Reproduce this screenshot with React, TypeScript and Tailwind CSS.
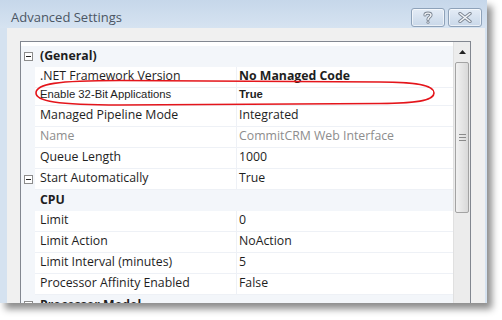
import React from "react";

type Row = {
  label: string;
  value?: string;
  category?: boolean;
  minus?: boolean;
  boldValue?: boolean;
  gray?: boolean;
  pasted?: boolean;
};

const ROWS: Row[] = [
  { label: "(General)", category: true, minus: true },
  { label: ".NET Framework Version", value: "No Managed Code", boldValue: true },
  { label: "Enable 32-Bit Applications", value: "True", boldValue: true, pasted: true },
  { label: "Managed Pipeline Mode", value: "Integrated" },
  { label: "Name", value: "CommitCRM Web Interface", gray: true },
  { label: "Queue Length", value: "1000" },
  { label: "Start Automatically", value: "True", minus: true },
  { label: "CPU", category: true },
  { label: "Limit", value: "0" },
  { label: "Limit Action", value: "NoAction" },
  { label: "Limit Interval (minutes)", value: "5" },
  { label: "Processor Affinity Enabled", value: "False" },
  { label: "Processor Model", category: true, minus: true },
];

function MinusBox() {
  return (
    <div className="w-[9px] h-[9px] border border-[#8c8c8c] bg-white flex items-center justify-center">
      <div className="w-[5px] h-px bg-[#222]" />
    </div>
  );
}

function GridRow({ row }: { row: Row }) {
  if (row.category) {
    return (
      <div className="flex h-[21px] shrink-0 bg-[#f3f6fa]">
        <div className="w-[14px] flex items-center justify-center">{row.minus && <MinusBox />}</div>
        <div className="pl-[5px] flex items-center font-bold text-[#1e1e1e]">{row.label}</div>
      </div>
    );
  }
  const h = row.pasted ? "h-[18px] pb-[3px]" : "h-[21px]";
  const text = row.pasted ? "font-['Liberation_Sans',sans-serif] text-[11.3px]" : "";
  return (
    <div className={`flex shrink-0 ${row.pasted ? "h-[18px]" : "h-[21px]"} ${text}`}>
      <div className="w-[14px] bg-[#f3f6fa] flex items-center justify-center">{row.minus && <MinusBox />}</div>
      <div
        className={`w-[202px] pl-[5px] flex items-center bg-white border-b border-r border-[#eef1f6] ${h} ${
          row.gray ? "text-[#8d8d8d]" : "text-[#1e1e1e]"
        }`}
      >
        {row.label}
      </div>
      <div
        className={`flex-1 pl-[2px] flex items-center bg-white border-b border-[#eef1f6] ${h} ${
          row.gray ? "text-[#8d8d8d]" : "text-[#1e1e1e]"
        } ${row.boldValue ? "font-bold" : ""}`}
      >
        {row.value}
      </div>
    </div>
  );
}

function Scrollbar() {
  return (
    <div className="w-[17px] bg-[#ececec] border-l border-[#e0e0e0] flex flex-col">
      <div className="h-[20px] flex items-center justify-center">
        <svg width="7" height="4" viewBox="0 0 7 4">
          <path d="M0 4 L3.5 0 L7 4 Z" fill="#222" />
        </svg>
      </div>
      <div className="mx-px h-[151px] rounded-[2px] border border-[#a3a3a3] bg-gradient-to-r from-[#f1f1f1] to-[#d9d9d9] flex flex-col items-center justify-center gap-[2px]">
        <div className="w-[7px] h-px bg-[#8a8a8a]" />
        <div className="w-[7px] h-px bg-[#8a8a8a]" />
        <div className="w-[7px] h-px bg-[#8a8a8a]" />
      </div>
    </div>
  );
}

function CaptionButton({ children }: { children: React.ReactNode }) {
  return (
    <div className="w-[34px] h-[19px] rounded-[3px] border border-[#8ea2b9] bg-gradient-to-b from-[#e4ecf6] to-[#c9d8e9] flex items-center justify-center shadow-[inset_0_0_0_1px_rgba(255,255,255,0.6)]">
      {children}
    </div>
  );
}

export default function App() {
  return (
    <div className="w-[502px] h-[320px] bg-white overflow-hidden relative font-['Open_Sans',sans-serif] text-[12.3px]">
      <div className="w-[487px] h-[303px] overflow-hidden flex flex-col shadow-[5px_6px_7px_rgba(0,0,0,0.45)] relative">
        {/* title bar */}
        <div className="h-[30px] flex items-start justify-between bg-gradient-to-b from-[#c6d7ea] to-[#d6e3f1] pl-[11px] pr-[5px]">
          <div className="mt-[8px] text-[13px] text-[#4b5664]">Advanced Settings</div>
          <div className="mt-[8px] flex gap-[3px]">
            <CaptionButton>
              <svg width="10" height="13" viewBox="0 0 10 13">
                <path d="M2 4 C2 1.5 8 1.5 8 4 C8 6 5 6 5 8.5" fill="none" stroke="#7d8794" strokeWidth="3.2" strokeLinecap="round" />
                <circle cx="5" cy="11.3" r="1.5" fill="#7d8794" />
                <path d="M2 4 C2 1.5 8 1.5 8 4 C8 6 5 6 5 8.5" fill="none" stroke="#f4f6f9" strokeWidth="1.4" strokeLinecap="round" />
                <circle cx="5" cy="11.3" r="0.7" fill="#f4f6f9" />
              </svg>
            </CaptionButton>
            <CaptionButton>
              <svg width="14" height="11" viewBox="0 0 14 11">
                <path d="M2 1.5 L12 9.5 M12 1.5 L2 9.5" stroke="#7d8794" strokeWidth="3.4" strokeLinecap="round" />
                <path d="M2 1.5 L12 9.5 M12 1.5 L2 9.5" stroke="#f4f6f9" strokeWidth="1.5" strokeLinecap="round" />
              </svg>
            </CaptionButton>
          </div>
        </div>

        {/* body */}
        <div className="flex-1 flex">
          <div className="w-[7px] bg-[#d5e2f0]" />
          <div className="flex-1 bg-[#f0f0f0] pt-[13px] pl-[13px]">
            <div className="w-[451px] h-[280px] border border-b-0 border-[#828790] flex">
              <div className="flex-1 flex flex-col pt-[4px] bg-white">
                {ROWS.map((r) => (
                  <GridRow key={r.label} row={r} />
                ))}
              </div>
              <Scrollbar />
            </div>
          </div>
          <div className="w-[2px] bg-[#d5e2f0]" />
        </div>

        {/* red highlight ellipse */}
        <svg className="absolute left-0 top-0" width="487" height="303" viewBox="0 0 487 303">
          <path
            d="M36 93 C36 84 56 80.5 120 80.5 L380 82 C424 82 434 87 434 93 C434 99 424 103.5 380 103.5 L120 105 C56 105 36 101 36 93 Z"
            fill="none"
            stroke="#e4151b"
            strokeWidth="1.6"
          />
        </svg>
      </div>
    </div>
  );
}
